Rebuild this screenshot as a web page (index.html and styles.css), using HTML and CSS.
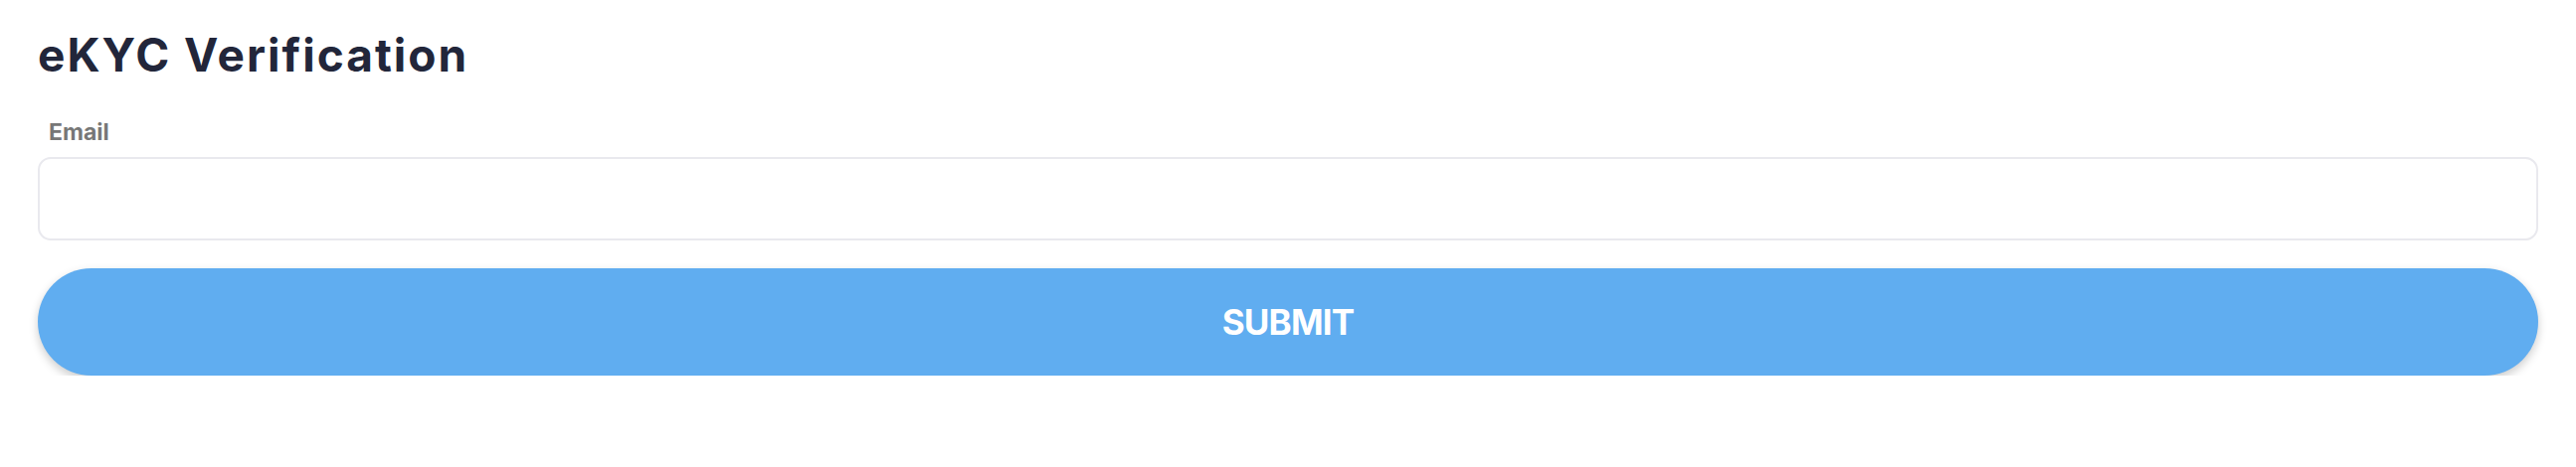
FILE: index.html
```html
<!DOCTYPE html>
<html lang="en">
<head>
  <meta charset="UTF-8">
  <meta name="viewport" content="width=device-width, initial-scale=1.0">
  <title>eKYC Verification</title>
  <link rel="stylesheet" href="styles.css">
</head>
<body>
  <div class="container">
    <h1>eKYC Verification</h1>

    <!-- Email Section -->
    <div class="field">
      <label for="email">Email</label>
      <input type="email" id="email" name="email">
    </div>

    <!-- Submit Button -->
    <button id="submitButton">SUBMIT</button>
  </div>
</body>
</html>
```

FILE: styles.css
```css
body {
  font-family: Inter, "Noto Sans", sans-serif;
  font-variant-ligatures: none;
  margin: 0;
  background-color: #fff;
}
.container {
  padding: 27px 38px 0 38px;
}
h1 {
  margin: 0;
  font-size: 46px;
  line-height: 56px;
  font-weight: 700;
  letter-spacing: 2px;
  color: #22263a;
}
.field {
  margin-top: 36px;
}
.field label {
  display: block;
  margin-left: 11px;
  font-size: 23px;
  line-height: 28px;
  font-weight: 700;
  color: #777;
}
.field input {
  display: block;
  box-sizing: border-box;
  width: 100%;
  height: 84px;
  margin-top: 11px;
  border: 2px solid #e9e9ee;
  border-radius: 13px;
  background: #fff;
  font-size: 24px;
  padding: 0 20px;
  outline: none;
}
button {
  display: block;
  width: 100%;
  height: 108px;
  margin-top: 28px;
  font-family: Inter, "Noto Sans", sans-serif;
  font-size: 35px;
  font-weight: 700;
  letter-spacing: -0.8px;
  color: #fff;
  background-color: #60adf0;
  border: none;
  border-radius: 54px;
  box-shadow: 0 4px 10px rgba(0, 0, 0, 0.2);
  cursor: pointer;
}
```
